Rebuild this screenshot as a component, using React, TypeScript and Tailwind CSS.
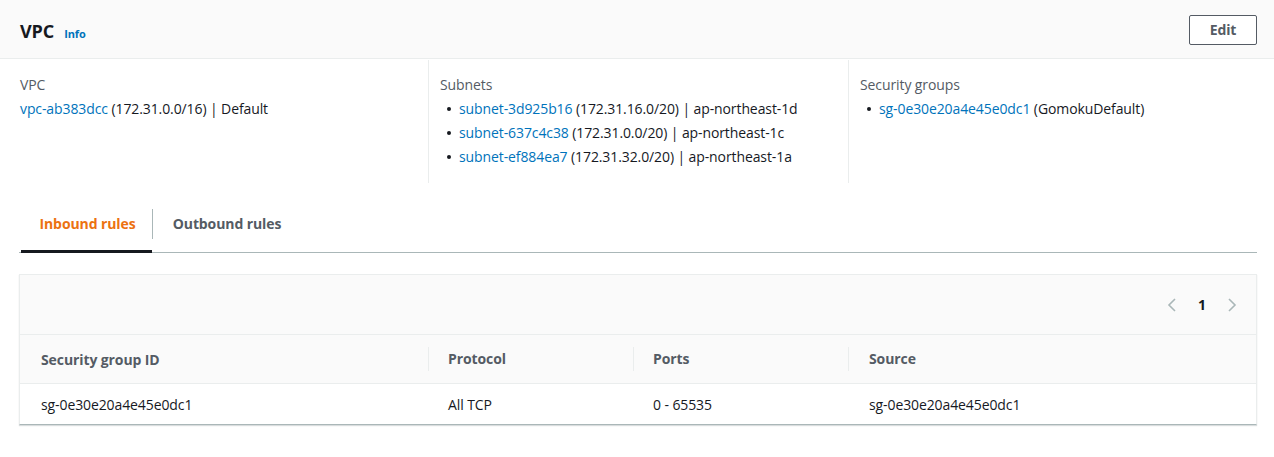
import React from "react";

const font = { fontFamily: '"Open Sans", "Noto Sans", Arial, sans-serif' };

function Link({ children }: { children: React.ReactNode }) {
  return <span className="text-[#0073bb]">{children}</span>;
}

function Bullet({ children }: { children: React.ReactNode }) {
  return (
    <li className="flex items-center h-[24px]">
      <span className="w-[4px] h-[4px] rounded-full bg-[#16191f] ml-[7px] mr-[8px] shrink-0" />
      <span>{children}</span>
    </li>
  );
}

export default function App() {
  return (
    <div className="w-[1274px] h-[457px] bg-white text-[14px] text-[#16191f] tracking-[-0.1px]" style={font}>
      <div className="h-[59px] bg-[#fafafa] border-b border-[#eaeded] flex items-center justify-between pl-[20px] pr-[17px]">
        <div className="flex items-baseline gap-[10px] pt-[4px]">
          <span className="text-[18px] font-bold text-[#16191f]">VPC</span>
          <span className="text-[11px] font-bold text-[#0073bb]">Info</span>
        </div>
        <button className="h-[30px] w-[68px] border border-[#545b64] rounded-[2px] bg-white text-[14px] font-bold text-[#545b64] mt-[1px]">
          Edit
        </button>
      </div>

      <div className="grid grid-cols-[428px_420px_1fr] mt-[1px] h-[123px]">
        <div className="pl-[20px] pt-[13px]">
          <div className="text-[#545b64] h-[24px] leading-[24px]">VPC</div>
          <div className="h-[24px] leading-[24px]">
            <Link>vpc-ab383dcc</Link> (172.31.0.0/16) | Default
          </div>
        </div>
        <div className="border-l border-[#eaeded] pl-[11px] pt-[13px]">
          <div className="text-[#545b64] h-[24px] leading-[24px]">Subnets</div>
          <ul className="leading-[24px]">
            <Bullet><Link>subnet-3d925b16</Link> (172.31.16.0/20) | ap-northeast-1d</Bullet>
            <Bullet><Link>subnet-637c4c38</Link> (172.31.0.0/20) | ap-northeast-1c</Bullet>
            <Bullet><Link>subnet-ef884ea7</Link> (172.31.32.0/20) | ap-northeast-1a</Bullet>
          </ul>
        </div>
        <div className="border-l border-[#eaeded] pl-[11px] pt-[13px]">
          <div className="text-[#545b64] h-[24px] leading-[24px]">Security groups</div>
          <ul className="leading-[24px]">
            <Bullet><Link>sg-0e30e20a4e45e0dc1</Link> (GomokuDefault)</Bullet>
          </ul>
        </div>
      </div>

      <div className="ml-[19px] mr-[17px] mt-[12px] flex items-stretch h-[58px] border-b border-[#aab7b8] relative">
        <div className="w-[133px] flex items-center justify-center relative">
          <span className="font-bold text-[#ec7211] pl-[4px]">Inbound rules</span>
          <span className="absolute left-[2px] right-0 bottom-[-1px] h-[3px] bg-[#16191f]" />
        </div>
        <div className="self-center w-px h-[30px] bg-[#aab7b8]" />
        <div className="w-[148px] flex items-center justify-center">
          <span className="font-bold text-[#545b64]">Outbound rules</span>
        </div>
      </div>

      <div className="ml-[19px] mr-[17px] mt-[21px] border border-[#eaeded] border-b-[#aab7b8] shadow-[0_1px_1px_rgba(0,28,36,0.15)]">
        <div className="h-[59px] bg-[#fafafa] flex items-center justify-end pr-[18px] gap-[20px]">
          <svg width="12" height="16" viewBox="0 0 12 16" fill="none" stroke="#aab7b8" strokeWidth="1.6">
            <path d="M9 2 L3 8 L9 14" />
          </svg>
          <span className="font-bold text-[#16191f] text-[14px]">1</span>
          <svg width="12" height="16" viewBox="0 0 12 16" fill="none" stroke="#aab7b8" strokeWidth="1.6">
            <path d="M3 2 L9 8 L3 14" />
          </svg>
        </div>
        <div className="grid grid-cols-[408px_205px_215px_1fr] h-[50px] bg-[#fafafa] border-t border-[#eaeded] border-b border-[#eaeded] items-center font-bold text-[#545b64]">
          <div className="pl-[21px]">Security group ID</div>
          <div className="pl-[19px] border-l border-[#eaeded] h-[24px] leading-[24px]">Protocol</div>
          <div className="pl-[19px] border-l border-[#eaeded] h-[24px] leading-[24px]">Ports</div>
          <div className="pl-[20px] border-l border-[#eaeded] h-[24px] leading-[24px]">Source</div>
        </div>
        <div className="grid grid-cols-[408px_205px_215px_1fr] h-[40px] items-center">
          <div className="pl-[21px]">sg-0e30e20a4e45e0dc1</div>
          <div className="pl-[20px]">All TCP</div>
          <div className="pl-[20px]">0 - 65535</div>
          <div className="pl-[21px]">sg-0e30e20a4e45e0dc1</div>
        </div>
      </div>
    </div>
  );
}
